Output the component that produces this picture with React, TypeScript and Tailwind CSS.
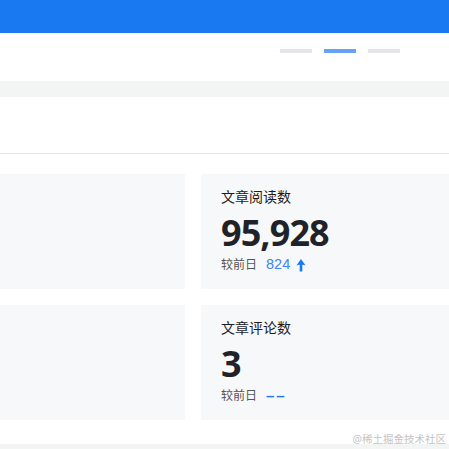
export default function App() {
  const cards = [
    { title: '', value: '', delta: null as null | string },
    { title: '文章阅读数', value: '95,928', delta: '824' },
    { title: '', value: '', delta: null },
    { title: '文章评论数', value: '3', delta: null },
  ]

  return (
    <div
      className="relative w-[449px] h-[449px] overflow-hidden bg-white"
      style={{ fontFamily: '"Noto Sans", "Noto Sans CJK SC", sans-serif' }}
    >
      <header className="h-[33px] bg-[#1879f1]" />

      <div className="h-[48px] flex justify-end items-start gap-3 pt-4 pr-[49px]">
        <span className="w-8 h-1 bg-[#e4e4ea]" />
        <span className="w-8 h-1 bg-[#6aa1f8]" />
        <span className="w-8 h-1 bg-[#e4e4ea]" />
      </div>

      <div className="h-4 bg-[#f3f4f4]" />

      <div className="h-[57px] border-b border-[#e5e5e7]" />

      <div className="grid grid-cols-[185px_1fr] gap-4 pt-5">
        {cards.map((card, i) => (
          <div key={i} className="h-[115px] bg-[#f7f8fa] pl-5 pt-3">
            {card.title && (
              <>
                <div className="text-[14px] leading-[22px] text-[#1d1d1f]">{card.title}</div>
                <div
                  className="mt-[3px] text-[36px] leading-[44px] font-bold tracking-[-0.9px] text-[#1f2329]"
                  style={{ fontFamily: '"Open Sans", sans-serif' }}
                >
                  {card.value}
                </div>
                <div className="flex items-center h-5 text-[12px] text-[#555]">
                  <span className="mr-[9px]">较前日</span>
                  {card.delta ? (
                    <>
                      <span className="text-[14.5px] text-[#3d84f7]" style={{ fontFamily: '"Liberation Sans", sans-serif' }}>
                        {card.delta}
                      </span>
                      <svg className="ml-[6px] w-[10px] h-[13px]" viewBox="0 0 10 13" fill="#1a78f0">
                        <path d="M5 0 L9.6 6.6 Q7.4 5.6 6.3 5.9 L6.3 12.5 L3.7 12.5 L3.7 5.9 Q2.6 5.6 0.4 6.6 Z" />
                      </svg>
                    </>
                  ) : (
                    <span
                      className="text-[15px] font-bold tracking-[2px] text-[#1f77f5]"
                      style={{ fontFamily: '"Liberation Sans", sans-serif' }}
                    >
                      ––
                    </span>
                  )}
                </div>
              </>
            )}
          </div>
        ))}
      </div>

      <div className="h-6" />
      <div className="h-[10px] bg-[#f3f4f4]" />

      <span className="absolute right-[3px] bottom-[1px] text-[10.5px] text-[#c4c4c4]">@稀土掘金技术社区</span>
    </div>
  )
}
